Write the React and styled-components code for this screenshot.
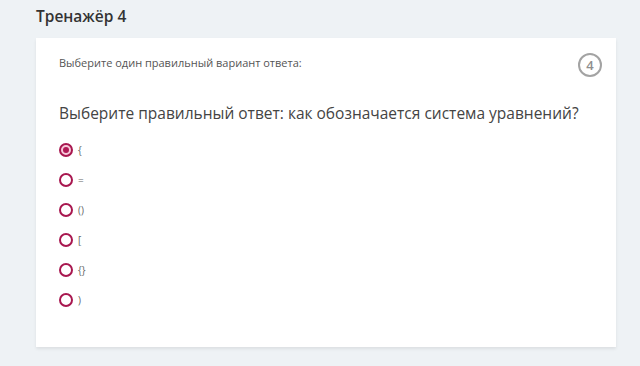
import React from 'react';
import styled, { createGlobalStyle } from 'styled-components';

const GlobalStyle = createGlobalStyle`
  html, body {
    margin: 0;
    padding: 0;
    background: #eef2f5;
    font-family: "Open Sans", "Noto Sans", sans-serif;
  }
`;

const Page = styled.div`
  width: 640px;
  height: 366px;
  padding: 5px 24px 0 36px;
  box-sizing: border-box;
`;

const Title = styled.h1`
  margin: 0 0 11px 0;
  font-size: 15.5px;
  font-weight: 600;
  color: #333;
  line-height: 22px;
`;

const Card = styled.div`
  width: 580px;
  height: 309px;
  background: #fff;
  box-sizing: border-box;
  padding: 18px 14px 0 23px;
  box-shadow: 0 2px 3px rgba(0, 0, 0, 0.08);
`;

const CardHead = styled.div`
  display: flex;
  justify-content: space-between;
  align-items: flex-start;
  height: 32px;
`;

const Hint = styled.div`
  font-size: 11px;
  color: #555;
  line-height: 14px;
`;

const Badge = styled.div`
  width: 24px;
  height: 24px;
  box-sizing: border-box;
  margin-top: -3px;
  border: 2.5px solid #a3a3a3;
  border-radius: 50%;
  color: #8f8f8f;
  font-size: 13px;
  font-weight: 600;
  display: flex;
  align-items: center;
  justify-content: center;
`;

const Question = styled.div`
  margin-top: 15px;
  font-size: 15.5px;
  color: #444;
  line-height: 20px;
  white-space: nowrap;
`;

const Options = styled.div`
  margin-top: 20px;
  display: flex;
  flex-direction: column;
  gap: 16px;
`;

const Option = styled.label`
  display: flex;
  align-items: center;
  gap: 5px;
  font-size: 10px;
  color: #666;
  height: 14px;
`;

const Radio = styled.span`
  width: 14px;
  height: 14px;
  box-sizing: border-box;
  border: 2px solid #a8174f;
  border-radius: 50%;
  display: flex;
  align-items: center;
  justify-content: center;
  background: ${p => (p.checked ? '#f7c9da' : '#fff')};
  &::after {
    content: '';
    width: 6px;
    height: 6px;
    border-radius: 50%;
    background: ${p => (p.checked ? '#b01a55' : 'transparent')};
  }
`;

const answers = ['{', '=', '()', '[', '{}', ')'];

export default function App() {
  return (
    <Page>
      <GlobalStyle />
      <Title>Тренажёр 4</Title>
      <Card>
        <CardHead>
          <Hint>Выберите один правильный вариант ответа:</Hint>
          <Badge>4</Badge>
        </CardHead>
        <Question>Выберите правильный ответ: как обозначается система уравнений?</Question>
        <Options>
          {answers.map((a, i) => (
            <Option key={i}>
              <Radio checked={i === 0} />
              {a}
            </Option>
          ))}
        </Options>
      </Card>
    </Page>
  );
}
